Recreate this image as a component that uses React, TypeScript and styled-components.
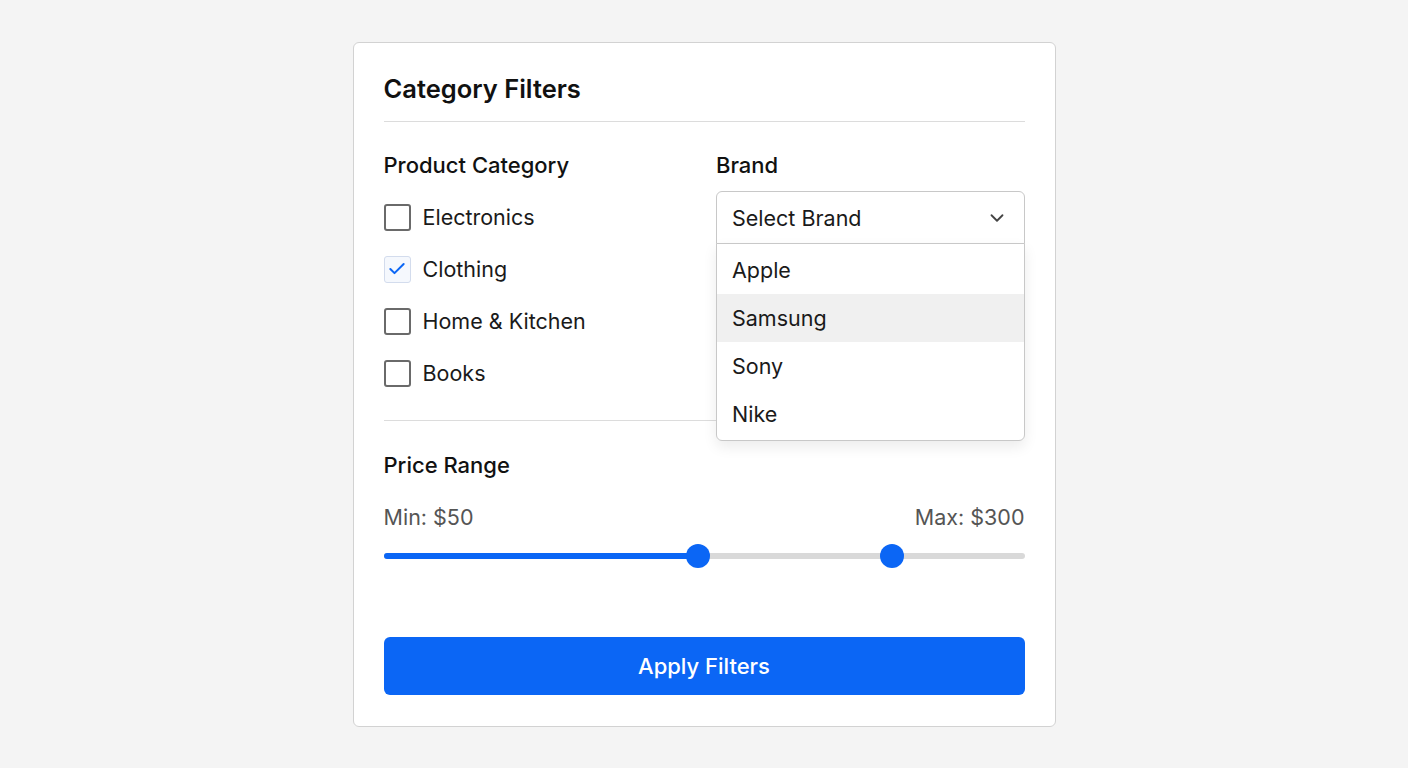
import styled, { createGlobalStyle } from 'styled-components';
import { ChevronDown, Check } from 'lucide-react';

const GlobalStyle = createGlobalStyle`
  * {
    box-sizing: border-box;
  }

  body {
    margin: 0;
    background-color: #f4f4f4;
    font-family: Inter, "Noto Sans", sans-serif;
    color: #1a1a1a;
  }
`;

const categories = [
  { name: 'Electronics', checked: false },
  { name: 'Clothing', checked: true },
  { name: 'Home & Kitchen', checked: false },
  { name: 'Books', checked: false },
];

const brands = ['Apple', 'Samsung', 'Sony', 'Nike'];

const range = { low: 49, high: 79.4 };

function App() {
  return (
    <>
      <GlobalStyle />
      <Page>
        <Card>
          <Title>Category Filters</Title>
          <Divider />
          <Columns>
            <Column>
              <Label>Product Category</Label>
              <CheckList>
                {categories.map((c) => (
                  <CheckRow key={c.name}>
                    <Box $checked={c.checked}>
                      {c.checked && <Check size={20} strokeWidth={2.4} color="#0b66f5" />}
                    </Box>
                    <CheckText>{c.name}</CheckText>
                  </CheckRow>
                ))}
              </CheckList>
            </Column>
            <Column>
              <Label>Brand</Label>
              <SelectWrap>
                <SelectButton>
                  <span>Select Brand</span>
                  <ChevronDown size={22} strokeWidth={2} color="#444" />
                </SelectButton>
                <Menu>
                  {brands.map((b) => (
                    <MenuItem key={b} $active={b === 'Samsung'}>
                      {b}
                    </MenuItem>
                  ))}
                </Menu>
              </SelectWrap>
            </Column>
          </Columns>
          <Divider $spaced />
          <Label>Price Range</Label>
          <RangeLabels>
            <span>Min: $50</span>
            <span>Max: $300</span>
          </RangeLabels>
          <Slider>
            <Track />
            <Fill style={{ width: `${range.low}%` }} />
            <Thumb style={{ left: `${range.low}%` }} />
            <Thumb style={{ left: `${range.high}%` }} />
          </Slider>
          <ApplyButton>Apply Filters</ApplyButton>
        </Card>
      </Page>
    </>
  );
}

export default App;

const Page = styled.div`
  display: flex;
  justify-content: center;
  align-items: flex-start;
  padding-top: 42px;
`;

const Card = styled.div`
  display: flex;
  flex-direction: column;
  width: 703px;
  padding: 29px 30px 31px;

  background-color: #ffffff;
  border: 1px solid #d2d2d2;
  border-radius: 6px;
`;

const Title = styled.h1`
  margin: 0;
  font-size: 25.5px;
  line-height: 34px;
  font-weight: 600;
  color: #111;
`;

const Divider = styled.hr<{ $spaced?: boolean }>`
  margin: ${(p) => (p.$spaced ? '34px 0 31px' : '15px 0 30px')};
  border: none;
  border-top: 1px solid #dcdcdc;
`;

const Columns = styled.div`
  display: grid;
  grid-template-columns: 1fr 1fr;
  gap: 24px;
`;

const Column = styled.div`
  display: flex;
  flex-direction: column;
`;

const Label = styled.div`
  font-size: 22px;
  line-height: 26px;
  font-weight: 500;
  color: #111;
`;

const CheckList = styled.div`
  display: flex;
  flex-direction: column;
  gap: 26px;
  margin-top: 26px;
`;

const CheckRow = styled.label`
  display: flex;
  align-items: center;
  gap: 12px;
  height: 26px;
`;

const Box = styled.span<{ $checked: boolean }>`
  display: flex;
  align-items: center;
  justify-content: center;
  width: 27px;
  height: 27px;
  border-radius: 3px;
  border: ${(p) => (p.$checked ? '1.5px solid #d3dced' : '2px solid #6a6a6a')};
  background-color: ${(p) => (p.$checked ? '#f5f8fd' : '#fff')};
`;

const CheckText = styled.span`
  font-size: 21.5px;
  color: #1a1a1a;
`;

const SelectWrap = styled.div`
  position: relative;
  margin-top: 13px;
`;

const SelectButton = styled.div`
  display: flex;
  align-items: center;
  justify-content: space-between;
  height: 53px;
  padding: 0 16px 0 15px;

  font-size: 21.5px;
  color: #1a1a1a;
  border: 1px solid #c8c8c8;
  border-radius: 6px 6px 0 0;
  background-color: #fff;
`;

const Menu = styled.div`
  position: absolute;
  top: 52px;
  left: 0;
  right: 0;
  z-index: 2;
  padding: 2px 0 2px;

  background-color: #fff;
  border: 1px solid #c8c8c8;
  border-radius: 0 0 6px 6px;
  box-shadow: 0 6px 14px rgba(0, 0, 0, 0.08);
`;

const MenuItem = styled.div<{ $active: boolean }>`
  display: flex;
  align-items: center;
  height: 48px;
  padding: 0 15px;

  font-size: 21.5px;
  color: #1a1a1a;
  background-color: ${(p) => (p.$active ? '#f0f0f0' : 'transparent')};
`;

const RangeLabels = styled.div`
  display: flex;
  justify-content: space-between;
  margin-top: 26px;

  font-size: 21.5px;
  line-height: 26px;
  color: #555;
`;

const Slider = styled.div`
  position: relative;
  height: 24px;
  margin-top: 14px;
`;

const Track = styled.div`
  position: absolute;
  top: 9px;
  left: 0;
  right: 0;
  height: 6px;
  border-radius: 3px;
  background-color: #d9d9d9;
`;

const Fill = styled.div`
  position: absolute;
  top: 9px;
  left: 0;
  height: 6px;
  border-radius: 3px;
  background-color: #0b66f5;
`;

const Thumb = styled.div`
  position: absolute;
  top: 0;
  width: 24px;
  height: 24px;
  margin-left: -12px;
  border-radius: 50%;
  background-color: #0b66f5;
`;

const ApplyButton = styled.button`
  height: 58px;
  margin-top: 69px;

  font-family: inherit;
  font-size: 22px;
  font-weight: 500;
  color: #fff;
  background-color: #0b66f5;
  border: none;
  border-radius: 6px;
`;
